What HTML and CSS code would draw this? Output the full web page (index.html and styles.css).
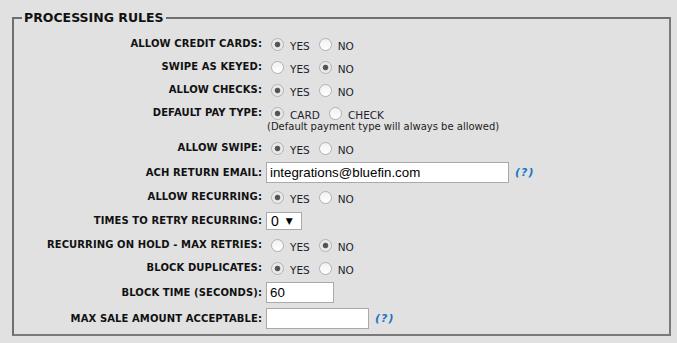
FILE: index.html
```html
<!DOCTYPE html>
<html lang="en">
<head>
  <meta charset="UTF-8">
  <title>Processing Rules</title>
  <link rel="stylesheet" href="styles.css">
</head>
<body>
  <fieldset class="rules">
    <legend>PROCESSING RULES</legend>

    <div class="rules-grid">
      <label class="rule-label">ALLOW CREDIT CARDS:</label>
      <div class="options">
        <input type="radio" name="cc" checked><span class="opt">YES</span>
        <input type="radio" name="cc"><span class="opt">NO</span>
      </div>

      <label class="rule-label">SWIPE AS KEYED:</label>
      <div class="options">
        <input type="radio" name="keyed"><span class="opt">YES</span>
        <input type="radio" name="keyed" checked><span class="opt">NO</span>
      </div>

      <label class="rule-label">ALLOW CHECKS:</label>
      <div class="options">
        <input type="radio" name="checks" checked><span class="opt">YES</span>
        <input type="radio" name="checks"><span class="opt">NO</span>
      </div>

      <label class="rule-label top">DEFAULT PAY TYPE:</label>
      <div class="options-block">
        <div class="options">
          <input type="radio" name="paytype" checked><span class="opt">CARD</span>
          <input type="radio" name="paytype"><span class="opt">CHECK</span>
        </div>
        <div class="note">(Default payment type will always be allowed)</div>
      </div>

      <label class="rule-label">ALLOW SWIPE:</label>
      <div class="options">
        <input type="radio" name="swipe" checked><span class="opt">YES</span>
        <input type="radio" name="swipe"><span class="opt">NO</span>
      </div>

      <label class="rule-label">ACH RETURN EMAIL:</label>
      <div class="field">
        <input type="text" class="text-input email" value="integrations@bluefin.com">
        <a class="help" href="#">(?)</a>
      </div>

      <label class="rule-label">ALLOW RECURRING:</label>
      <div class="options">
        <input type="radio" name="recurring" checked><span class="opt">YES</span>
        <input type="radio" name="recurring"><span class="opt">NO</span>
      </div>

      <label class="rule-label">TIMES TO RETRY RECURRING:</label>
      <div class="field">
        <span class="select">0<span class="arrow">▼</span></span>
      </div>

      <label class="rule-label">RECURRING ON HOLD - MAX RETRIES:</label>
      <div class="options">
        <input type="radio" name="hold"><span class="opt">YES</span>
        <input type="radio" name="hold" checked><span class="opt">NO</span>
      </div>

      <label class="rule-label">BLOCK DUPLICATES:</label>
      <div class="options">
        <input type="radio" name="dups" checked><span class="opt">YES</span>
        <input type="radio" name="dups"><span class="opt">NO</span>
      </div>

      <label class="rule-label">BLOCK TIME (SECONDS):</label>
      <div class="field">
        <input type="text" class="text-input seconds" value="60">
      </div>

      <label class="rule-label">MAX SALE AMOUNT ACCEPTABLE:</label>
      <div class="field">
        <input type="text" class="text-input amount" value="">
        <a class="help" href="#">(?)</a>
      </div>
    </div>
  </fieldset>
</body>
</html>
```

FILE: styles.css
```css
:root {
  --fondo: #e1e1e1;
  --borde: #737373;
  --texto: #111111;
  --opcion: #1e1e2e;
  --azul: #1a76c2;
  --input-borde: #a9a9a9;
}

body {
  margin: 0;
  padding: 10px 6px 0 12px;
  background-color: var(--fondo);
  font-family: "DejaVu Sans", Verdana, sans-serif;
  color: var(--texto);
}

.rules {
  margin: 0;
  padding: 0 8px 6px 8px;
  border: 2px solid var(--borde);
  border-color: #6f6f6f #7a7a7a #7a7a7a #6f6f6f;
}

.rules legend {
  padding: 0 2px;
  font-size: 12.5px;
  font-weight: bold;
  line-height: 16px;
}

.rules-grid {
  display: grid;
  grid-template-columns: 240px 1fr;
  column-gap: 4px;
  row-gap: 7px;
  align-items: center;
  padding-top: 10px;
}

.rule-label {
  text-align: right;
  font-size: 10px;
  font-weight: bold;
  line-height: 16px;
  letter-spacing: 0.1px;
  white-space: nowrap;
}

.rule-label.top {
  align-self: start;
}

.options {
  display: flex;
  align-items: center;
  height: 16px;
}

.options input[type="radio"] {
  appearance: none;
  width: 13px;
  height: 13px;
  margin: 0 3px 0 5px;
  border: 1px solid #b1b1b1;
  border-radius: 50%;
  background: linear-gradient(#f1f1f1, #ffffff);
}

.options input[type="radio"]:checked {
  background: radial-gradient(circle, #4e4e4e 0, #5a5a5a 2.4px, #e6e6e6 3.2px, #f4f4f4 100%);
}

.opt {
  font-size: 10.5px;
  color: var(--opcion);
  padding: 4px 4px 0 3px;
  line-height: 14px;
}

.note {
  font-size: 10px;
  color: #222222;
  line-height: 12px;
  margin-left: 1px;
}

.field {
  display: flex;
  align-items: center;
}

.text-input {
  box-sizing: border-box;
  height: 21px;
  margin: -1px 0;
  padding: 0 3px;
  border: 1px solid var(--input-borde);
  background-color: #ffffff;
  font-family: "Liberation Sans", Arial, sans-serif;
  font-size: 13.3px;
  color: #000000;
  outline: none;
}

.email {
  width: 243px;
}

.seconds {
  width: 68px;
}

.amount {
  width: 103px;
}

.help {
  margin-left: 6px;
  color: var(--azul);
  font-size: 11px;
  font-weight: bold;
  font-style: italic;
  text-decoration: none;
  letter-spacing: 1px;
}

.select {
  box-sizing: border-box;
  display: inline-flex;
  align-items: center;
  width: 36px;
  height: 18px;
  padding-left: 4px;
  border: 1px solid var(--input-borde);
  background-color: #ffffff;
  font-family: "Liberation Sans", Arial, sans-serif;
  font-size: 14px;
  color: #000000;
}

.select .arrow {
  margin-left: 7px;
  font-family: "DejaVu Sans", sans-serif;
  font-size: 9px;
}
```
